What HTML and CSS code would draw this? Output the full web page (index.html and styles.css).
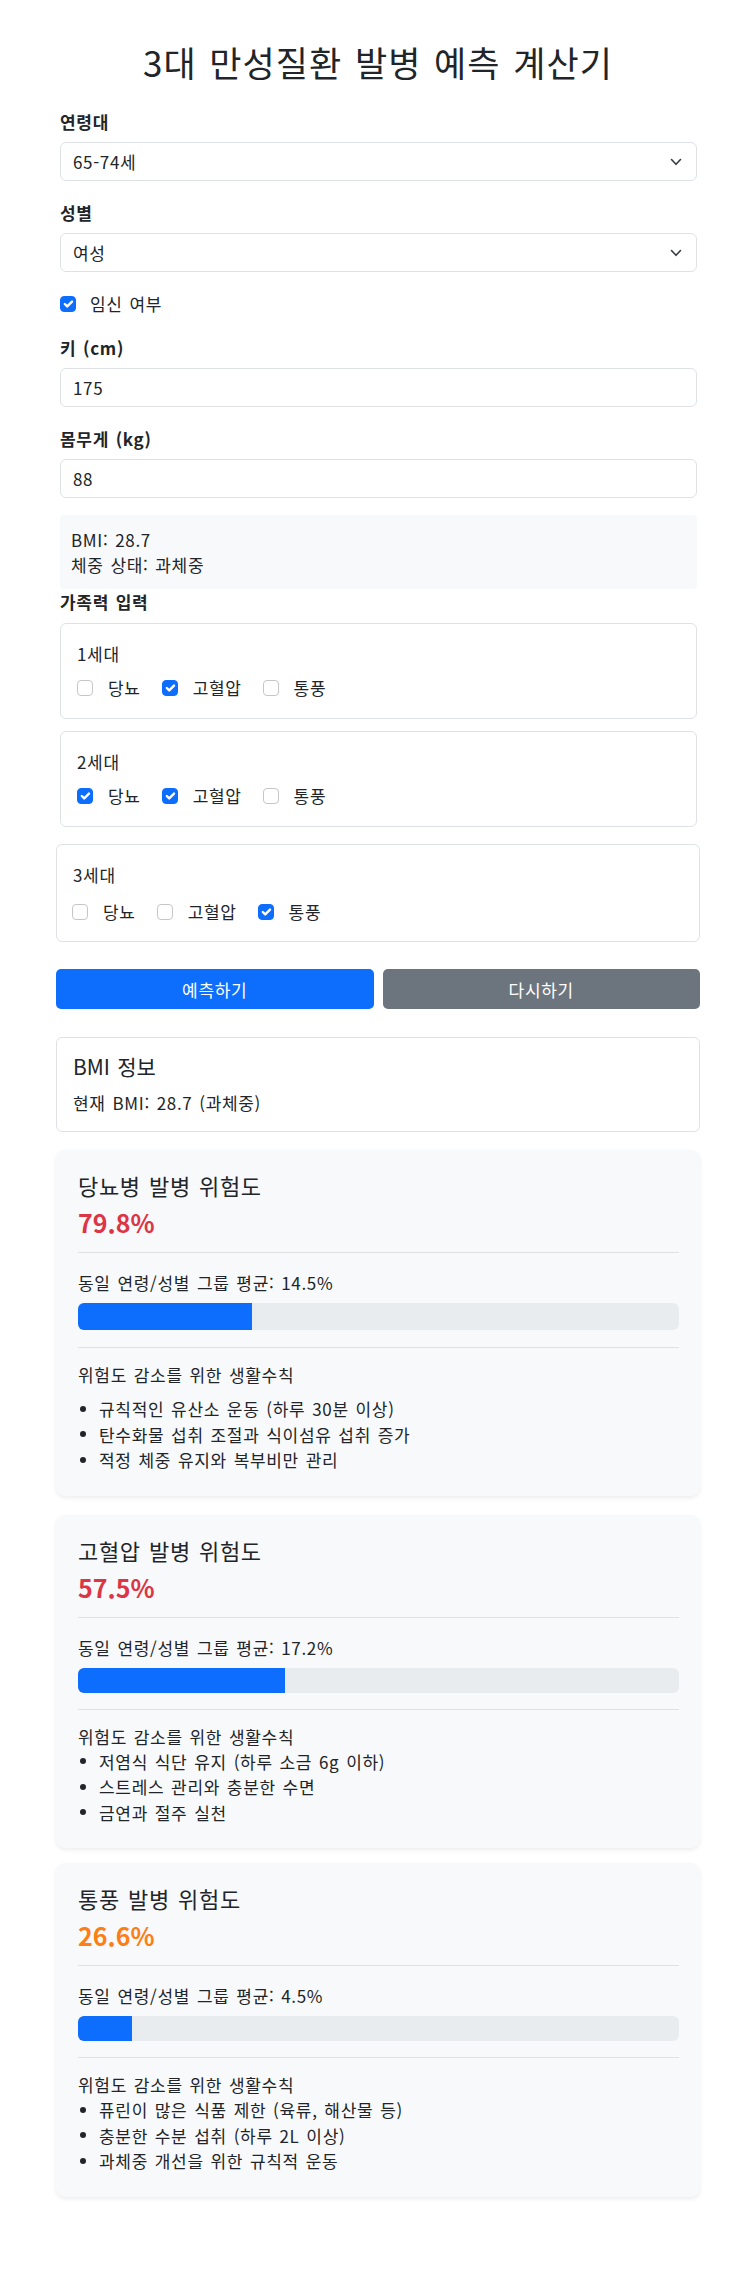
FILE: index.html
```html
<!DOCTYPE html>
<html lang="ko">
<head>
<meta charset="utf-8">
<title>3대 만성질환 발병 예측 계산기</title>
<link rel="stylesheet" href="styles.css">
</head>
<body>
<div class="container">
  <h1 class="title">3대 만성질환 발병 예측 계산기</h1>

  <div class="form">
    <div class="group">
      <div class="label">연령대</div>
      <div class="field select"><span>65-74세</span><svg class="chev" width="12" height="8" viewBox="0 0 12 8"><path d="M1.5 1.5 6 6.3 10.5 1.5" fill="none" stroke="#343a40" stroke-width="1.6" stroke-linecap="round" stroke-linejoin="round"/></svg></div>
    </div>
    <div class="group">
      <div class="label">성별</div>
      <div class="field select"><span>여성</span><svg class="chev" width="12" height="8" viewBox="0 0 12 8"><path d="M1.5 1.5 6 6.3 10.5 1.5" fill="none" stroke="#343a40" stroke-width="1.6" stroke-linecap="round" stroke-linejoin="round"/></svg></div>
    </div>
    <div class="check-row">
      <span class="cb on"><svg width="16" height="16" viewBox="0 0 20 20"><path d="m6 10 3 3 6-6" fill="none" stroke="#fff" stroke-width="3" stroke-linecap="round" stroke-linejoin="round"/></svg></span>
      <span>임신 여부</span>
    </div>
    <div class="group">
      <div class="label">키 (cm)</div>
      <div class="field">175</div>
    </div>
    <div class="group group-last">
      <div class="label">몸무게 (kg)</div>
      <div class="field">88</div>
    </div>
    <div class="bmi-box">
      <div>BMI: 28.7</div>
      <div>체중 상태: 과체중</div>
    </div>
    <div class="label label-family">가족력 입력</div>
    <div class="gen">
      <div class="gen-title">1세대</div>
      <div class="opts">
        <span class="opt"><span class="cb"></span>당뇨</span>
        <span class="opt"><span class="cb on"><svg width="16" height="16" viewBox="0 0 20 20"><path d="m6 10 3 3 6-6" fill="none" stroke="#fff" stroke-width="3" stroke-linecap="round" stroke-linejoin="round"/></svg></span>고혈압</span>
        <span class="opt"><span class="cb"></span>통풍</span>
      </div>
    </div>
    <div class="gen">
      <div class="gen-title">2세대</div>
      <div class="opts">
        <span class="opt"><span class="cb on"><svg width="16" height="16" viewBox="0 0 20 20"><path d="m6 10 3 3 6-6" fill="none" stroke="#fff" stroke-width="3" stroke-linecap="round" stroke-linejoin="round"/></svg></span>당뇨</span>
        <span class="opt"><span class="cb on"><svg width="16" height="16" viewBox="0 0 20 20"><path d="m6 10 3 3 6-6" fill="none" stroke="#fff" stroke-width="3" stroke-linecap="round" stroke-linejoin="round"/></svg></span>고혈압</span>
        <span class="opt"><span class="cb"></span>통풍</span>
      </div>
    </div>
  </div>

  <div class="gen gen-wide">
    <div class="gen-title">3세대</div>
    <div class="opts">
      <span class="opt"><span class="cb"></span>당뇨</span>
      <span class="opt"><span class="cb"></span>고혈압</span>
      <span class="opt"><span class="cb on"><svg width="16" height="16" viewBox="0 0 20 20"><path d="m6 10 3 3 6-6" fill="none" stroke="#fff" stroke-width="3" stroke-linecap="round" stroke-linejoin="round"/></svg></span>통풍</span>
    </div>
  </div>

  <div class="btn-row">
    <button class="btn btn-primary" type="button">예측하기</button>
    <button class="btn btn-secondary" type="button">다시하기</button>
  </div>

  <div class="bmi-card">
    <div class="bmi-card-title">BMI 정보</div>
    <div>현재 BMI: 28.7 (과체중)</div>
  </div>

  <div class="risk-card risk-card-first">
    <div class="risk-title">당뇨병 발병 위험도</div>
    <div class="risk-pct red">79.8%</div>
    <hr class="divider">
    <div class="avg">동일 연령/성별 그룹 평균: 14.5%</div>
    <div class="bar"><div class="bar-fill" style="width:29%"></div></div>
    <hr class="divider">
    <div class="tips-title">위험도 감소를 위한 생활수칙</div>
    <ul class="tips">
      <li>규칙적인 유산소 운동 (하루 30분 이상)</li>
      <li>탄수화물 섭취 조절과 식이섬유 섭취 증가</li>
      <li>적정 체중 유지와 복부비만 관리</li>
    </ul>
  </div>

  <div class="risk-card risk-card-second">
    <div class="risk-title">고혈압 발병 위험도</div>
    <div class="risk-pct red">57.5%</div>
    <hr class="divider">
    <div class="avg">동일 연령/성별 그룹 평균: 17.2%</div>
    <div class="bar"><div class="bar-fill" style="width:34.4%"></div></div>
    <hr class="divider">
    <div class="tips-title">위험도 감소를 위한 생활수칙</div>
    <ul class="tips">
      <li>저염식 식단 유지 (하루 소금 6g 이하)</li>
      <li>스트레스 관리와 충분한 수면</li>
      <li>금연과 절주 실천</li>
    </ul>
  </div>

  <div class="risk-card risk-card-third">
    <div class="risk-title">통풍 발병 위험도</div>
    <div class="risk-pct orange">26.6%</div>
    <hr class="divider">
    <div class="avg">동일 연령/성별 그룹 평균: 4.5%</div>
    <div class="bar"><div class="bar-fill" style="width:9%"></div></div>
    <hr class="divider">
    <div class="tips-title">위험도 감소를 위한 생활수칙</div>
    <ul class="tips">
      <li>퓨린이 많은 식품 제한 (육류, 해산물 등)</li>
      <li>충분한 수분 섭취 (하루 2L 이상)</li>
      <li>과체중 개선을 위한 규칙적 운동</li>
    </ul>
  </div>
</div>
</body>
</html>
```

FILE: styles.css
```css
html, body {
  margin: 0;
  background: #fff;
}
body {
  padding: 0 0 60px 3px;
  font-family: "Noto Sans CJK KR", "Noto Sans", sans-serif;
  font-size: 17px;
  line-height: 25px;
  letter-spacing: 0.04em;
  word-spacing: 0.08em;
  color: #212529;
}
.container {
  width: 644px;
  margin: 0 auto;
}
.title {
  margin: 41px 0 26px;
  font-size: 35px;
  line-height: 42px;
  font-weight: 400;
  letter-spacing: 0.03em;
  word-spacing: 0.05em;
  text-align: center;
}
.form {
  margin: 0 3px 0 4px;
}
.group {
  margin-bottom: 19px;
}
.group-last {
  margin-bottom: 17px;
}
.label {
  font-weight: 700;
  line-height: 25px;
  margin-bottom: 8px;
}
.label-family {
  margin-bottom: 9px;
}
.field {
  box-sizing: border-box;
  height: 39px;
  border: 1px solid #dee2e6;
  border-radius: 6px;
  padding: 6px 12px;
  line-height: 25px;
  background: #fff;
}
.select {
  display: flex;
  align-items: center;
  justify-content: space-between;
  padding-right: 14px;
}
.chev {
  display: block;
}
.check-row {
  display: flex;
  align-items: center;
  height: 25px;
  margin-bottom: 19px;
}
.check-row .cb {
  margin-right: 14px;
}
.cb {
  box-sizing: border-box;
  flex: none;
  width: 16px;
  height: 16px;
  border: 1px solid #c4c6c9;
  border-radius: 4px;
  background: #fff;
  display: inline-flex;
  align-items: center;
  justify-content: center;
  overflow: hidden;
}
.cb svg {
  display: block;
  flex: none;
}
.cb.on {
  background: #0d6efd;
  border-color: #0d6efd;
}
.bmi-box {
  background: #f8f9fa;
  border-radius: 4px;
  padding: 12px 11px;
}
.gen {
  border: 1px solid #dee2e6;
  border-radius: 6px;
  padding: 17px 16px 18px 16px;
  margin-bottom: 12px;
}
.gen-title {
  margin-bottom: 9px;
}
.gen-wide {
  margin: 17px 0 0;
  padding: 17px 16px 17px 15px;
}
.gen-wide .gen-title {
  margin-bottom: 12px;
  padding-left: 1px;
}
.opts {
  display: flex;
  align-items: center;
  height: 25px;
}
.opt {
  display: flex;
  align-items: center;
  margin-right: 21px;
}
.opt .cb {
  margin-right: 15px;
}
.btn-row {
  display: grid;
  grid-template-columns: 1fr 1fr;
  gap: 9px;
  margin-top: 27px;
}
.btn {
  height: 40px;
  border: none;
  border-radius: 5px;
  font-family: inherit;
  font-size: 17px;
  line-height: 25px;
  letter-spacing: 0.04em;
  color: #fff;
  padding: 0;
  cursor: pointer;
}
.btn-primary {
  background: #0d6efd;
}
.btn-secondary {
  background: #6c757d;
}
.bmi-card {
  margin-top: 28px;
  border: 1px solid #dee2e6;
  border-radius: 6px;
  padding: 16px;
}
.bmi-card-title {
  font-size: 21px;
  line-height: 25px;
  letter-spacing: 0;
  margin-bottom: 11px;
}
.risk-card {
  background: #f8f9fa;
  border-radius: 9px;
  box-shadow: 0 2px 4px rgba(0, 0, 0, 0.075);
  padding: 22px 21px 23px 22px;
}
.risk-card-first {
  margin-top: 18px;
}
.risk-card-second {
  margin-top: 19px;
}
.risk-card-third {
  margin-top: 15px;
}
.risk-title {
  font-size: 22px;
  line-height: 26px;
  margin-bottom: 7px;
}
.risk-pct {
  font-size: 25px;
  line-height: 34px;
  font-weight: 700;
  letter-spacing: 0;
}
.red {
  color: #dc3545;
}
.orange {
  color: #fd7e14;
}
.divider {
  border: none;
  border-top: 1px solid #dfe2e5;
  margin: 13px 0 17px;
  height: 0;
}
.bar + .divider {
  margin: 16px 0 14px;
}
.avg {
  margin-bottom: 8px;
}
.bar {
  height: 25px;
  background: #e9ecef;
  border-radius: 6px;
  overflow: hidden;
}
.bar-fill {
  height: 100%;
  background: #0d6efd;
}
.risk-card-first .bar {
  height: 27px;
}
.risk-card-first .bar + .divider {
  margin-top: 17px;
}
.risk-card-first .tips-title {
  margin-bottom: 9px;
}
.tips {
  list-style: none;
  margin: 0;
  padding: 0;
}
.tips li {
  display: flex;
  align-items: center;
  line-height: 25.5px;
}
.tips li::before {
  content: "";
  flex: none;
  width: 6px;
  height: 6px;
  border-radius: 50%;
  background: #212529;
  margin: 0 13px 0 2px;
}
```
